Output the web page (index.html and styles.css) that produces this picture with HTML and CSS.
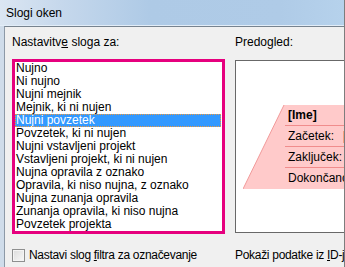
FILE: index.html
```html
<!DOCTYPE html>
<html lang="sl">
<head>
<meta charset="utf-8">
<title>Slogi oken</title>
<link rel="stylesheet" href="styles.css">
</head>
<body>
<div class="window">
  <div class="titlebar">Slogi oken</div>
  <div class="frame">
    <div class="dialog">
      <div class="label">Nastavitv<u>e</u> sloga za:</div>
      <div class="label">Predogled:</div>

      <div class="listwrap">
        <ul class="list">
          <li>Nujno</li>
          <li>Ni nujno</li>
          <li>Nujni mejnik</li>
          <li>Mejnik, ki ni nujen</li>
          <li class="selected">Nujni povzetek</li>
          <li>Povzetek, ki ni nujen</li>
          <li>Nujni vstavljeni projekt</li>
          <li>Vstavljeni projekt, ki ni nujen</li>
          <li>Nujna opravila z oznako</li>
          <li>Opravila, ki niso nujna, z oznako</li>
          <li>Nujna zunanja opravila</li>
          <li>Zunanja opravila, ki niso nujna</li>
          <li>Povzetek projekta</li>
        </ul>
      </div>

      <div class="preview">
        <div class="shape">
          <svg class="shape-bg" viewBox="0 0 200 84" preserveAspectRatio="none" aria-hidden="true">
            <polygon points="41,0 200,0 200,84 0,84" fill="#ffcaca"/>
            <line x1="0" y1="84" x2="41" y2="0" stroke="#f19a9a" stroke-width="1"/>
          </svg>
          <div class="rows">
            <div class="row bold">[Ime]</div>
            <div class="row"><span class="key">Začetek:</span><span class="val">[</span></div>
            <div class="row"><span class="key">Zaključek:</span></div>
            <div class="row"><span class="key">Dokončano:</span></div>
          </div>
        </div>
      </div>

      <label class="check">
        <span class="box"></span>
        <span class="tight">Nastavi slog <u>f</u>iltra za označevanje</span>
      </label>
      <div class="label bottom tight">Pokaži podatke iz <u>I</u>D-ja</div>
    </div>
  </div>
</div>
</body>
</html>
```

FILE: styles.css
```css
* { box-sizing: border-box; }

html, body {
  margin: 0;
  padding: 0;
  width: 345px;
  height: 267px;
  overflow: hidden;
  background: #f0f0f0;
}

body {
  font-family: "Liberation Sans", Arial, sans-serif;
  font-size: 12px;
  color: #000;
}

.window {
  width: 345px;
  height: 267px;
  display: flex;
  flex-direction: column;
  border-right: 1px solid #7d7d7d;
}

.titlebar {
  height: 26px;
  padding: 2px 0 0 6px;
  line-height: 23px;
  color: #000;
  background: linear-gradient(to right, #dbe6f2 0px, #c6d8ec 60px, #aecae6 150px, #afcbe7 280px, #b6d2ec 100%);
  border-bottom: 1px solid #e2edf8;
}

.frame {
  flex: 1;
  display: flex;
  min-height: 0;
  padding-left: 4px;
  background: #cfdcea;
}

.dialog {
  flex: 1;
  min-width: 0;
  display: grid;
  grid-template-columns: 213px minmax(0, 1fr);
  grid-template-rows: 14px auto 14px;
  column-gap: 10px;
  align-content: start;
  padding: 8px 0 0 7px;
  background: #f0f0f0;
  border-left: 1px solid #8c99a7;
  border-top: 1px solid #77838f;
  overflow: hidden;
}

.label {
  line-height: 14px;
  white-space: nowrap;
}

.tight {
  letter-spacing: -0.3px;
}

.listwrap {
  margin-top: 10px;
  border: 3px solid #e6007e;
  background: #fff;
  height: 175px;
  padding-right: 1px;
}

.list {
  list-style: none;
  margin: 0;
  padding: 0;
}

.list li {
  height: 13px;
  line-height: 13px;
  padding-left: 1px;
  white-space: nowrap;
}

.list li.selected {
  background: #3399ff;
  color: #fff;
  outline: 1px dotted #f09a3c;
  outline-offset: -1px;
}

.preview {
  margin-top: 11px;
  width: 170px;
  height: 173px;
  border: 1px solid #686868;
  background: #fff;
  padding: 44px 0 0 7px;
  overflow: hidden;
}

.shape {
  position: relative;
  width: 200px;
  height: 84px;
}

.shape-bg {
  position: absolute;
  left: 0;
  top: 0;
  width: 200px;
  height: 84px;
}

.rows {
  position: relative;
  margin-left: 42px;
}

.row {
  height: 21px;
  line-height: 20px;
  padding-left: 3px;
  border-bottom: 1px solid #f08c8c;
  white-space: nowrap;
  display: flex;
}

.row:last-child {
  border-bottom: none;
}

.row.bold {
  font-weight: bold;
}

.key {
  width: 55px;
  flex: none;
}

.val {
  color: #3a0a3a;
}

.check {
  margin-top: 14px;
  display: flex;
  align-items: flex-start;
  gap: 4px;
  line-height: 14px;
  white-space: nowrap;
  grid-row: 3;
}

.box {
  width: 13px;
  height: 13px;
  margin-top: 1px;
  flex: none;
  border: 1px solid #8e8f8f;
  background: linear-gradient(135deg, #dcdcdc, #f8f8f8);
  box-shadow: inset 0 0 0 1px #f4f4f4;
}

.bottom {
  margin-top: 14px;
  grid-row: 3;
}
```
